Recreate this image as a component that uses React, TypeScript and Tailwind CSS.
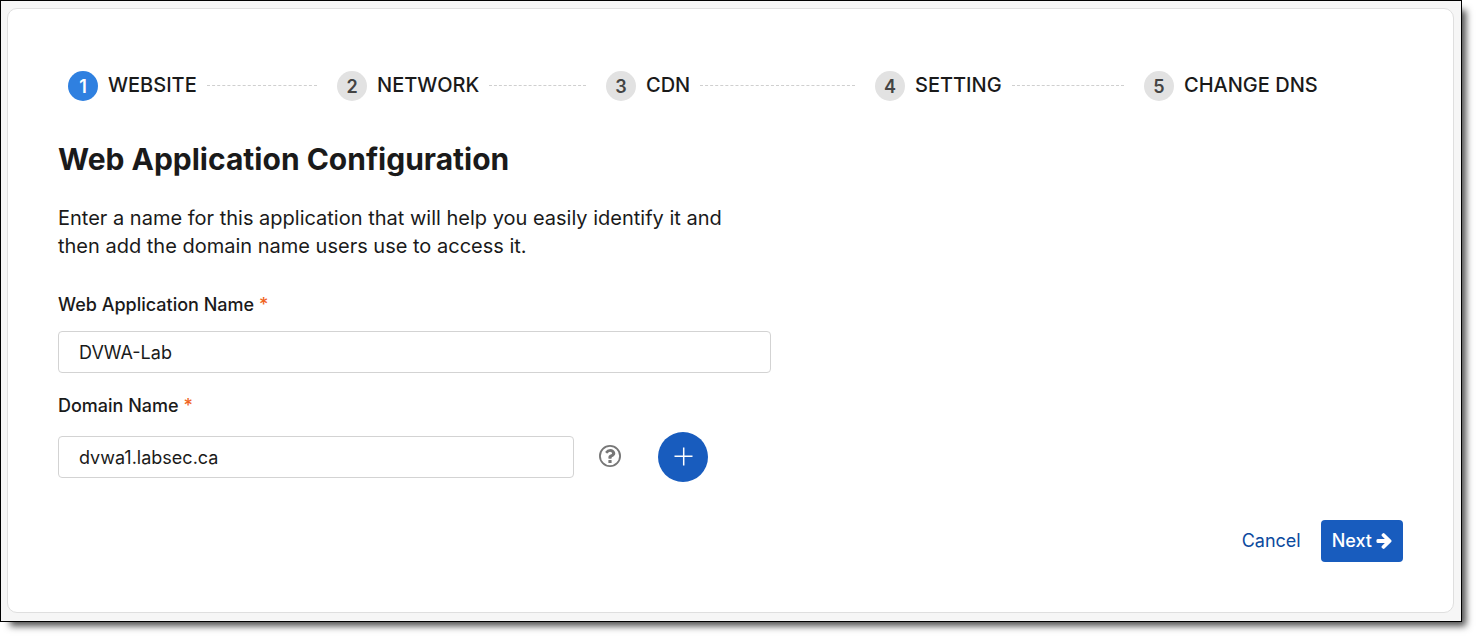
import { useState } from "react";

const steps = ["WEBSITE", "NETWORK", "CDN", "SETTING", "CHANGE DNS"];

function ArrowRightIcon() {
  return (
    <svg viewBox="0 181 1472 1558" className="size-4" fill="currentColor" aria-hidden="true">
      <path d="M1472 960q0 54-37 91l-651 651q-39 37-91 37-51 0-90-37l-75-75q-38-38-38-91t38-91l293-293H117q-52 0-84.5-37.5T0 1024V896q0-53 32.5-90.5T117 768h704L528 474q-38-36-38-90t38-90l75-75q38-38 90-38 53 0 91 38l651 651q37 35 37 90z" />
    </svg>
  );
}

function QuestionIcon() {
  return (
    <svg viewBox="128 128 1536 1536" className="size-[22px]" fill="currentColor" aria-hidden="true">
      <path d="M1008 1200v160q0 14-9 23t-23 9h-160q-14 0-23-9t-9-23v-160q0-14 9-23t23-9h160q14 0 23 9t9 23zm256-496q0 50-15 90t-45.500 69-52 44-59.500 36q-32 18-46.500 28t-26 24-11.500 29v32q0 14-9 23t-23 9h-160q-14 0-23-9t-9-23v-68q0-35 10.500-64.500t24-47.500 39-35.500 41-25.500 44.500-21q53-25 75-43t22-49q0-42-43.500-71.500t-95.500-29.500q-56 0-95 27-29 20-80 83-9 12-25 12-11 0-19-6l-108-82q-10-7-12-20t5-23q122-192 349-192 129 0 238.500 89.500t109.500 214.500z" />
      <circle cx="896" cy="896" r="704" fill="none" stroke="currentColor" strokeWidth="128" />
    </svg>
  );
}

function Stepper({ current }: { current: number }) {
  return (
    <ol className="grid grid-cols-5">
      {steps.map((label, index) => (
        <li
          key={label}
          aria-current={index === current ? "step" : undefined}
          className="flex h-[30px] items-center gap-2.5 px-2.5"
        >
          <span
            className={
              index === current
                ? "flex size-[30px] shrink-0 items-center justify-center rounded-full bg-[#2f80e0] pt-px text-lg font-semibold text-white"
                : "flex size-[30px] shrink-0 items-center justify-center rounded-full bg-[#e2e2e2] pt-px text-lg font-semibold text-[#444]"
            }
          >
            {index + 1}
          </span>
          <span className="pb-0.5 text-xl font-medium whitespace-nowrap">{label}</span>
          {index < steps.length - 1 && (
            <span className="mb-px flex-1 border-t border-dashed border-[#cfcfcf]" />
          )}
        </li>
      ))}
    </ol>
  );
}

function FieldLabel({ htmlFor, text }: { htmlFor: string; text: string }) {
  return (
    <label htmlFor={htmlFor} className="block text-lg/7 font-medium">
      {text} <span className="text-[#f06422]">*</span>
    </label>
  );
}

const inputClass =
  "h-[42px] w-full rounded border border-[#d3d3d3] bg-white px-5 text-lg outline-none focus:border-[#185cbe]";

export default function App() {
  const [name, setName] = useState("DVWA-Lab");
  const [domain, setDomain] = useState("dvwa1.labsec.ca");

  return (
    <div className="bg-white pr-[15px] pb-[15px] font-['Inter',sans-serif] text-[#1a1a1a]">
      <main className="border border-black bg-[#f6f6f6] pt-[7px] pr-[7px] pb-2 pl-1.5 shadow-[7px_7px_7px_-3px_rgba(0,0,0,0.7)]">
        <form
          className="rounded-[10px] border border-[#dfdfdf] bg-white px-[50px] pt-[62px] pb-[50px]"
          onSubmit={(event) => event.preventDefault()}
        >
          <Stepper current={0} />

          <h1 className="mt-[38px] text-3xl/10 font-bold">Web Application Configuration</h1>
          <p className="mt-[25px] max-w-[700px] text-xl/7">
            Enter a name for this application that will help you easily identify it and then add
            the domain name users use to access it.
          </p>

          <div className="mt-[31px] max-w-[713px]">
            <FieldLabel htmlFor="app-name" text="Web Application Name" />
            <input
              id="app-name"
              className={inputClass + " mt-3"}
              value={name}
              onChange={(event) => setName(event.target.value)}
            />
          </div>

          <div className="mt-[19px]">
            <FieldLabel htmlFor="domain-name" text="Domain Name" />
            <div className="mt-3 flex items-center">
              <div className="w-[516px]">
                <input
                  id="domain-name"
                  className={inputClass}
                  value={domain}
                  onChange={(event) => setDomain(event.target.value)}
                />
              </div>
              <button type="button" aria-label="Help" className="ml-[25px] pb-0.5 text-[#777]">
                <QuestionIcon />
              </button>
              <button
                type="button"
                aria-label="Add domain"
                className="ml-[37px] flex size-[50px] items-center justify-center rounded-full bg-[#185cbe] text-white"
              >
                <svg viewBox="0 0 20 20" className="size-5" fill="none" stroke="currentColor" strokeWidth="1.500">
                  <path d="M10.700 0.500v18M1.500 9.300h18" />
                </svg>
              </button>
            </div>
          </div>

          <div className="mt-[38px] flex items-center justify-end gap-5 text-lg">
            <a href="#cancel" className="text-[#0b4a9e]">
              Cancel
            </a>
            <button
              type="submit"
              className="flex h-[42px] items-center gap-1 rounded bg-[#185cbe] px-[11px] font-medium text-white"
            >
              Next
              <ArrowRightIcon />
            </button>
          </div>
        </form>
      </main>
    </div>
  );
}
